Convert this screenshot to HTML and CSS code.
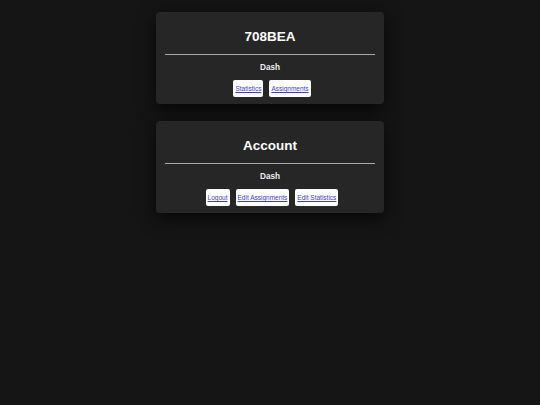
FILE: index.html
```html
<!DOCTYPE html>
<html>
<head>
        <meta charset="UTF-8">
        <title>Dash</title>
        <link rel="stylesheet" href="styles.css">
</head>
<body>
        <div class="page">
                <div class="card">
                        <h1 class="title">708BEA</h1>
                        <hr class="rule">
                        <h3 class="sub">Dash</h3>
                        <div class="links">
                                <a class="btn" href="#">Statistics</a>
                                <a class="btn" href="#">Assignments</a>
                        </div>
                </div>
                <div class="card">
                        <h1 class="title">Account</h1>
                        <hr class="rule">
                        <h3 class="sub">Dash</h3>
                        <div class="links">
                                <a class="btn" href="#">Logout</a>
                                <a class="btn" href="#">Edit Assignments</a>
                                <a class="btn" href="#">Edit Statistics</a>
                        </div>
                </div>
        </div>
</body>
</html>
```

FILE: styles.css
```css
*{
        margin: 0;
        padding: 0;
}
html, body{
        height: 100%;
}
body{
        background: #151515;
        font-family: "Liberation Sans", Arial, sans-serif;
        color: #ffffff;
}
.page{
        display: flex;
        flex-direction: column;
        align-items: center;
        gap: 17px;
        padding-top: 12px;
}
.card{
        width: 210px;
        padding: 16px 9px 7px;
        background: #262626;
        border-radius: 4px;
        box-shadow: 0 5px 18px rgba(0,0,0,0.75);
        text-align: center;
}
.title{
        font-size: 13.5px;
        line-height: 18px;
        font-weight: bold;
}
.rule{
        border: none;
        border-top: 1px solid #a8a8a8;
        margin: 8px 0 8px;
}
.sub{
        font-size: 8.2px;
        line-height: 10px;
        font-weight: bold;
        color: #eeeeee;
}
.links{
        display: flex;
        justify-content: center;
        gap: 6px;
        margin-top: 7px;
        padding-left: 4px;
}
.btn{
        display: block;
        height: 17px;
        line-height: 17px;
        padding: 0 2px;
        background: #ffffff;
        border-radius: 2px;
        font-size: 6.5px;
        color: #3b3bd6;
        text-decoration: underline;
}
```
